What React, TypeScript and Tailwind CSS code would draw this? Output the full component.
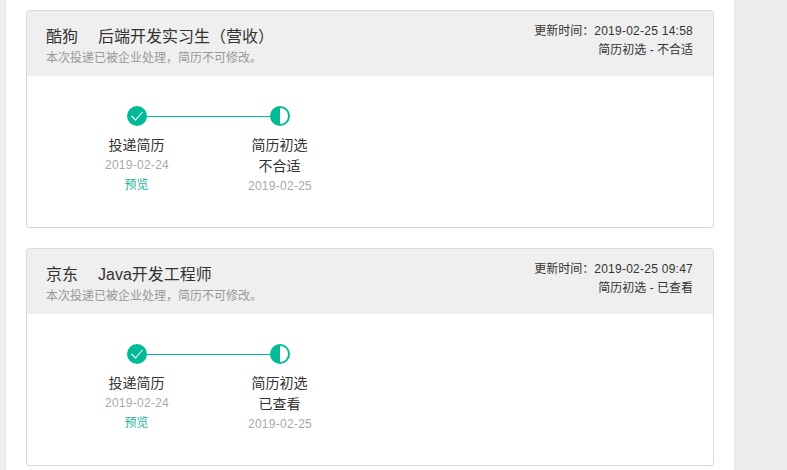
import React from 'react';

const FONT = '"Liberation Sans", "Noto Sans CJK SC", sans-serif';

interface Step {
    name: string;
    status?: string;
    date: string;
    preview?: boolean;
    half?: boolean;
}

interface Delivery {
    company: string;
    job: string;
    updated: string;
    state: string;
    steps: Step[];
}

const deliveries: Delivery[] = [
    {
        company: '酷狗',
        job: '后端开发实习生（营收）',
        updated: '2019-02-25 14:58',
        state: '简历初选 - 不合适',
        steps: [
            { name: '投递简历', date: '2019-02-24', preview: true },
            { name: '简历初选', status: '不合适', date: '2019-02-25', half: true },
        ],
    },
    {
        company: '京东',
        job: 'Java开发工程师',
        updated: '2019-02-25 09:47',
        state: '简历初选 - 已查看',
        steps: [
            { name: '投递简历', date: '2019-02-24', preview: true },
            { name: '简历初选', status: '已查看', date: '2019-02-25', half: true },
        ],
    },
];

const CheckDot = () => (
    <svg width="20" height="20" viewBox="0 0 20 20" className="block shrink-0">
        <circle cx="10" cy="10" r="10" fill="#00bb96" />
        <path d="M4.5 10 L8.5 14 L15.5 6" fill="none" stroke="#ffffff" strokeWidth="1.1" />
    </svg>
);

const HalfDot = () => (
    <svg width="20" height="20" viewBox="0 0 20 20" className="block shrink-0">
        <circle cx="10" cy="10" r="10" fill="#00bb96" />
        <path d="M10 2 A8 8 0 0 1 10 18 Z" fill="#ffffff" />
    </svg>
);

const StepItem = ({ step, first, last }: { step: Step; first: boolean; last: boolean }) => (
    <div className="w-[143px] flex flex-col items-center">
        <div className="w-full flex items-center h-5">
            <div className={`flex-1 h-px ${first ? '' : 'bg-[#00bb96]'}`} />
            {step.half ? <HalfDot /> : <CheckDot />}
            <div className={`flex-1 h-px ${last ? '' : 'bg-[#00bb96]'}`} />
        </div>
        <div className="mt-[9px] text-[14px] leading-[21px] text-[#333]">{step.name}</div>
        {step.status && <div className="text-[14px] leading-[21px] text-[#333]">{step.status}</div>}
        <div className="pl-px text-[12px] leading-[18px] tracking-[0.27px] text-[#a9a9a9]">{step.date}</div>
        {step.preview && <div className="mt-[2px] text-[12px] leading-[18px] text-[#1cb597]">预览</div>}
    </div>
);

const DeliveryCard = ({ item }: { item: Delivery }) => (
    <div className="h-[218px] border border-[#d9d9d9] rounded-[3px] bg-white overflow-hidden">
        <div className="h-[65px] bg-[#efefef] pl-[19px] pr-[20px] flex justify-between">
            <div>
                <div className="mt-[15px] text-[16px] leading-[22px] text-[#333] flex">
                    <span className="w-[52px]">{item.company}</span>
                    <span>{item.job}</span>
                </div>
                <div className="mt-px text-[12px] leading-[18px] text-[#999]">本次投递已被企业处理，简历不可修改。</div>
            </div>
            <div className="pt-[11px] text-right text-[12px] leading-[19px] text-[#333]">
                <div>更新时间：<span className="tracking-[0.25px]">{item.updated}</span></div>
                <div>{item.state}</div>
            </div>
        </div>
        <div className="pt-[30px] pl-[38px] flex">
            {item.steps.map((step, i) => (
                <StepItem key={step.name} step={step} first={i === 0} last={i === item.steps.length - 1} />
            ))}
        </div>
    </div>
);

export default function App() {
    return (
        <div className="w-[787px] h-[470px] overflow-hidden bg-[#eeeeee]" style={{ fontFamily: FONT }}>
            <div className="ml-[5px] w-[730px] h-[470px] bg-white border-x border-[#e4e4e4] pt-[10px] pl-[20px] flex flex-col gap-[20px]">
                {deliveries.map(item => (
                    <div key={item.company} className="w-[688px]">
                        <DeliveryCard item={item} />
                    </div>
                ))}
            </div>
        </div>
    );
}
